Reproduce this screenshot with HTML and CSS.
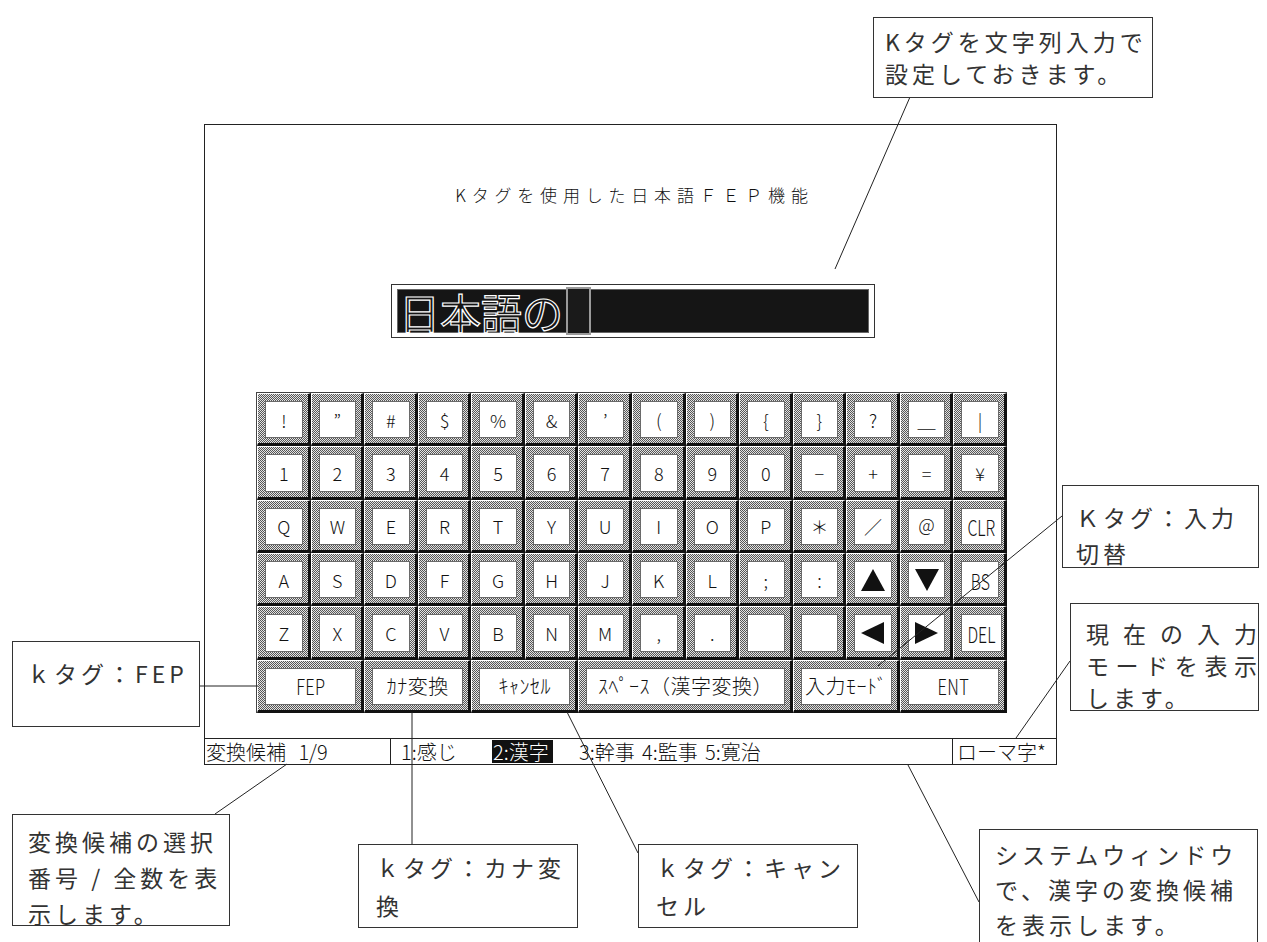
FILE: index.html
```html
<!DOCTYPE html>
<html lang="ja">
<head>
<meta charset="utf-8">
<title>Kタグを使用した日本語FEP機能</title>
<link rel="stylesheet" href="styles.css">
</head>
<body>
<div class="page">
  <div class="screen">
    <div class="title">Kタグを使用した日本語ＦＥＰ機能</div>
    <div class="field">
      <div class="field-in"><span class="ftext">日本語の</span><span class="cursor"></span></div>
    </div>
    <div class="kb">
      <div class="key"><div class="face">!</div></div>
      <div class="key"><div class="face">”</div></div>
      <div class="key"><div class="face">#</div></div>
      <div class="key"><div class="face">$</div></div>
      <div class="key"><div class="face">%</div></div>
      <div class="key"><div class="face">&amp;</div></div>
      <div class="key"><div class="face">’</div></div>
      <div class="key"><div class="face">(</div></div>
      <div class="key"><div class="face">)</div></div>
      <div class="key"><div class="face">{</div></div>
      <div class="key"><div class="face">}</div></div>
      <div class="key"><div class="face">?</div></div>
      <div class="key"><div class="face">＿</div></div>
      <div class="key"><div class="face">|</div></div>

      <div class="key"><div class="face">1</div></div>
      <div class="key"><div class="face">2</div></div>
      <div class="key"><div class="face">3</div></div>
      <div class="key"><div class="face">4</div></div>
      <div class="key"><div class="face">5</div></div>
      <div class="key"><div class="face">6</div></div>
      <div class="key"><div class="face">7</div></div>
      <div class="key"><div class="face">8</div></div>
      <div class="key"><div class="face">9</div></div>
      <div class="key"><div class="face">0</div></div>
      <div class="key"><div class="face">−</div></div>
      <div class="key"><div class="face">+</div></div>
      <div class="key"><div class="face">=</div></div>
      <div class="key"><div class="face">¥</div></div>

      <div class="key"><div class="face">Q</div></div>
      <div class="key"><div class="face">W</div></div>
      <div class="key"><div class="face">E</div></div>
      <div class="key"><div class="face">R</div></div>
      <div class="key"><div class="face">T</div></div>
      <div class="key"><div class="face">Y</div></div>
      <div class="key"><div class="face">U</div></div>
      <div class="key"><div class="face">I</div></div>
      <div class="key"><div class="face">O</div></div>
      <div class="key"><div class="face">P</div></div>
      <div class="key"><div class="face">＊</div></div>
      <div class="key"><div class="face">／</div></div>
      <div class="key"><div class="face">＠</div></div>
      <div class="key"><div class="face"><span class="cond">CLR</span></div></div>

      <div class="key"><div class="face">A</div></div>
      <div class="key"><div class="face">S</div></div>
      <div class="key"><div class="face">D</div></div>
      <div class="key"><div class="face">F</div></div>
      <div class="key"><div class="face">G</div></div>
      <div class="key"><div class="face">H</div></div>
      <div class="key"><div class="face">J</div></div>
      <div class="key"><div class="face">K</div></div>
      <div class="key"><div class="face">L</div></div>
      <div class="key"><div class="face">;</div></div>
      <div class="key"><div class="face">:</div></div>
      <div class="key"><div class="face"><svg class="tri" width="24" height="22" viewBox="0 0 24 22"><polygon points="12,0 24,22 0,22"/></svg></div></div>
      <div class="key"><div class="face"><svg class="tri" width="24" height="22" viewBox="0 0 24 22"><polygon points="0,0 24,0 12,22"/></svg></div></div>
      <div class="key"><div class="face"><span class="cond">BS</span></div></div>

      <div class="key"><div class="face">Z</div></div>
      <div class="key"><div class="face">X</div></div>
      <div class="key"><div class="face">C</div></div>
      <div class="key"><div class="face">V</div></div>
      <div class="key"><div class="face">B</div></div>
      <div class="key"><div class="face">N</div></div>
      <div class="key"><div class="face">M</div></div>
      <div class="key"><div class="face">,</div></div>
      <div class="key"><div class="face">.</div></div>
      <div class="key"><div class="face"></div></div>
      <div class="key"><div class="face"></div></div>
      <div class="key"><div class="face"><svg class="tri" width="23" height="22" viewBox="0 0 23 22"><polygon points="23,0 23,22 0,11"/></svg></div></div>
      <div class="key"><div class="face"><svg class="tri" width="23" height="22" viewBox="0 0 23 22"><polygon points="0,0 23,11 0,22"/></svg></div></div>
      <div class="key"><div class="face"><span class="cond">DEL</span></div></div>

      <div class="key span2"><div class="face big"><span class="cond2">FEP</span></div></div>
      <div class="key span2"><div class="face big">ｶﾅ変換</div></div>
      <div class="key span2"><div class="face big">ｷｬﾝｾﾙ</div></div>
      <div class="key span4"><div class="face big">ｽﾍﾟｰｽ（漢字変換）</div></div>
      <div class="key span2"><div class="face big">入力ﾓｰﾄﾞ</div></div>
      <div class="key span2"><div class="face big"><span class="cond2">ENT</span></div></div>
    </div>
    <div class="status">
      <div class="st-left">変換候補 1/9</div>
      <div class="st-mid">
        <span class="cand c1">1:感じ</span>
        <span class="cand c2"><span class="hl">2:漢字</span></span>
        <span class="cand c3">3:幹事</span>
        <span class="cand c3">4:監事</span>
        <span class="cand">5:寛治</span>
      </div>
      <div class="st-right">ローマ字*</div>
    </div>
  </div>

  <svg class="leaders" width="1267" height="942" viewBox="0 0 1267 942">
    <line x1="910" y1="97" x2="835" y2="269"/>
    <line x1="1062" y1="516" x2="878" y2="666"/>
    <line x1="1070" y1="661" x2="1016" y2="738"/>
    <line x1="199" y1="686" x2="258" y2="686"/>
    <line x1="215" y1="814" x2="287" y2="764"/>
    <line x1="412" y1="712" x2="412" y2="844"/>
    <line x1="567" y1="712" x2="638" y2="853"/>
    <line x1="908" y1="765" x2="979" y2="902"/>
  </svg>

  <div class="note n1">Kタグを文字列入力で<br>設定しておきます。</div>
  <div class="note n2">Ｋタグ：入力<br>切替</div>
  <div class="note n3"><div class="just">現在の入力</div><div class="just">モードを表示</div><div>します。</div></div>
  <div class="note n4">ｋタグ：FEP</div>
  <div class="note n5">変換候補の選択<br>番号 / 全数を表<br>示します。</div>
  <div class="note n6">ｋタグ：カナ変<br>換</div>
  <div class="note n7">ｋタグ：キャン<br>セル</div>
  <div class="note n8">システムウィンドウ<br>で、漢字の変換候補<br>を表示します。</div>
</div>
</body>
</html>
```

FILE: styles.css
```css
* { box-sizing: border-box; }
html, body { margin: 0; padding: 0; background: #fff; }
body { font-family: "Noto Sans CJK JP", "Noto Sans", sans-serif; color: #222; }

.page {
  position: relative;
  width: 1267px;
  height: 942px;
  overflow: hidden;
  padding: 124px 0 0 204px;
  background: #fff;
}

.screen {
  width: 853px;
  height: 641px;
  border: 1px solid #222;
  display: flex;
  flex-direction: column;
}

.title {
  margin-top: 60px;
  height: 20px;
  line-height: 20px;
  text-align: center;
  font-size: 17px;
  font-weight: 300;
  letter-spacing: 5.8px;
  padding-left: 8px;
  color: #111;
}

.field {
  margin: 79px 0 0 186px;
  width: 484px;
  height: 54px;
  border: 1px solid #333;
  padding: 4px 5px;
  background: #fff;
}
.field-in {
  height: 100%;
  background: #151515;
  border: 1px solid #666;
  display: flex;
  align-items: center;
  padding-left: 1px;
}
.ftext {
  font-size: 41px;
  line-height: 43px;
  color: #151515;
  -webkit-text-stroke: 1.2px #fff;
  letter-spacing: 0;
}
.cursor {
  display: inline-block;
  width: 25px;
  height: 48px;
  margin: -3px 0 -3px 3px;
  border: 2px solid #9a9a9a;
  background: #1a1a1a;
}

.kb {
  margin: 54px 0 0 51px;
  width: 751px;
  display: grid;
  grid-template-columns: repeat(14, 53.57px);
  grid-template-rows: repeat(6, 53.33px);
  border-left: 1px solid #444;
  border-top: 1px solid #444;
}
.key {
  border-style: solid;
  border-width: 1px 3px 3px 1px;
  border-color: #fff #111 #111 #fff;
  padding: 7px 5px 5px 7px;
  background: repeating-conic-gradient(#555 0 25%, #e4e4e4 0 50%) 0 0 / 2px 2px;
  display: flex;
}
.span2 { grid-column: span 2; }
.span4 { grid-column: span 4; }
.face {
  flex: 1;
  background: #fff;
  border: 1px solid #6a6a6a;
  display: flex;
  align-items: center;
  justify-content: center;
  font-size: 18px;
  font-weight: 300;
  line-height: 1;
  color: #111;
}
.face.big { font-size: 20px; letter-spacing: 0.5px; }
.cond {
  display: inline-block;
  font-size: 22px;
  transform: scaleX(0.72);
}
.cond2 {
  display: inline-block;
  font-size: 21px;
  transform: scaleX(0.78);
}
.tri polygon { fill: #111; }

.status {
  margin-top: auto;
  height: 26px;
  border-top: 1px solid #222;
  display: flex;
  font-size: 20px;
  line-height: 25px;
  font-weight: 300;
  color: #111;
  white-space: nowrap;
}
.st-left { width: 186px; border-right: 1px solid #222; padding-left: 1px; word-spacing: 8px; }
.st-mid { flex: 1; display: flex; padding-left: 10px; }
.st-right { width: 104px; border-left: 1px solid #222; padding-left: 4px; }
.cand { display: inline-block; }
.c1 { width: 91px; }
.c2 { width: 87px; }
.c3 { width: 63px; }
.hl {
  display: inline-block;
  background: #111;
  color: #fff;
  height: 23px;
  line-height: 23px;
  margin-top: 1px;
  padding: 0 4px 0 1px;
}

.leaders {
  position: absolute;
  left: 0;
  top: 0;
  pointer-events: none;
}
.leaders line { stroke: #222; stroke-width: 1; }

.note {
  position: absolute;
  background: #fff;
  border: 1px solid #333;
  font-size: 23px;
  letter-spacing: 4px;
  color: #333;
  white-space: nowrap;
}
.n1 { left: 873px; top: 17px; width: 280px; height: 81px; padding: 7px 0 0 11px; line-height: 32px; }
.n2 { left: 1062px; top: 485px; width: 197px; height: 83px; padding: 13px 0 0 13px; line-height: 36px; }
.n3 { left: 1070px; top: 603px; width: 189px; height: 108px; padding: 13px 1px 0 15px; line-height: 32px; }
.n3 .just { text-align: justify; text-align-last: justify; letter-spacing: 0; }
.n4 { left: 12px; top: 641px; width: 188px; height: 86px; padding: 13px 0 0 14px; line-height: 36px; }
.n5 { left: 12px; top: 814px; width: 218px; height: 112px; padding: 8px 0 0 15px; line-height: 36px; }
.n6 { left: 358px; top: 844px; width: 220px; height: 84px; padding: 3px 0 0 17px; line-height: 38px; }
.n7 { left: 638px; top: 844px; width: 220px; height: 84px; padding: 3px 0 0 17px; line-height: 38px; }
.n8 { left: 979px; top: 829px; width: 279px; height: 130px; padding: 7px 0 0 15px; line-height: 35px; }
```
